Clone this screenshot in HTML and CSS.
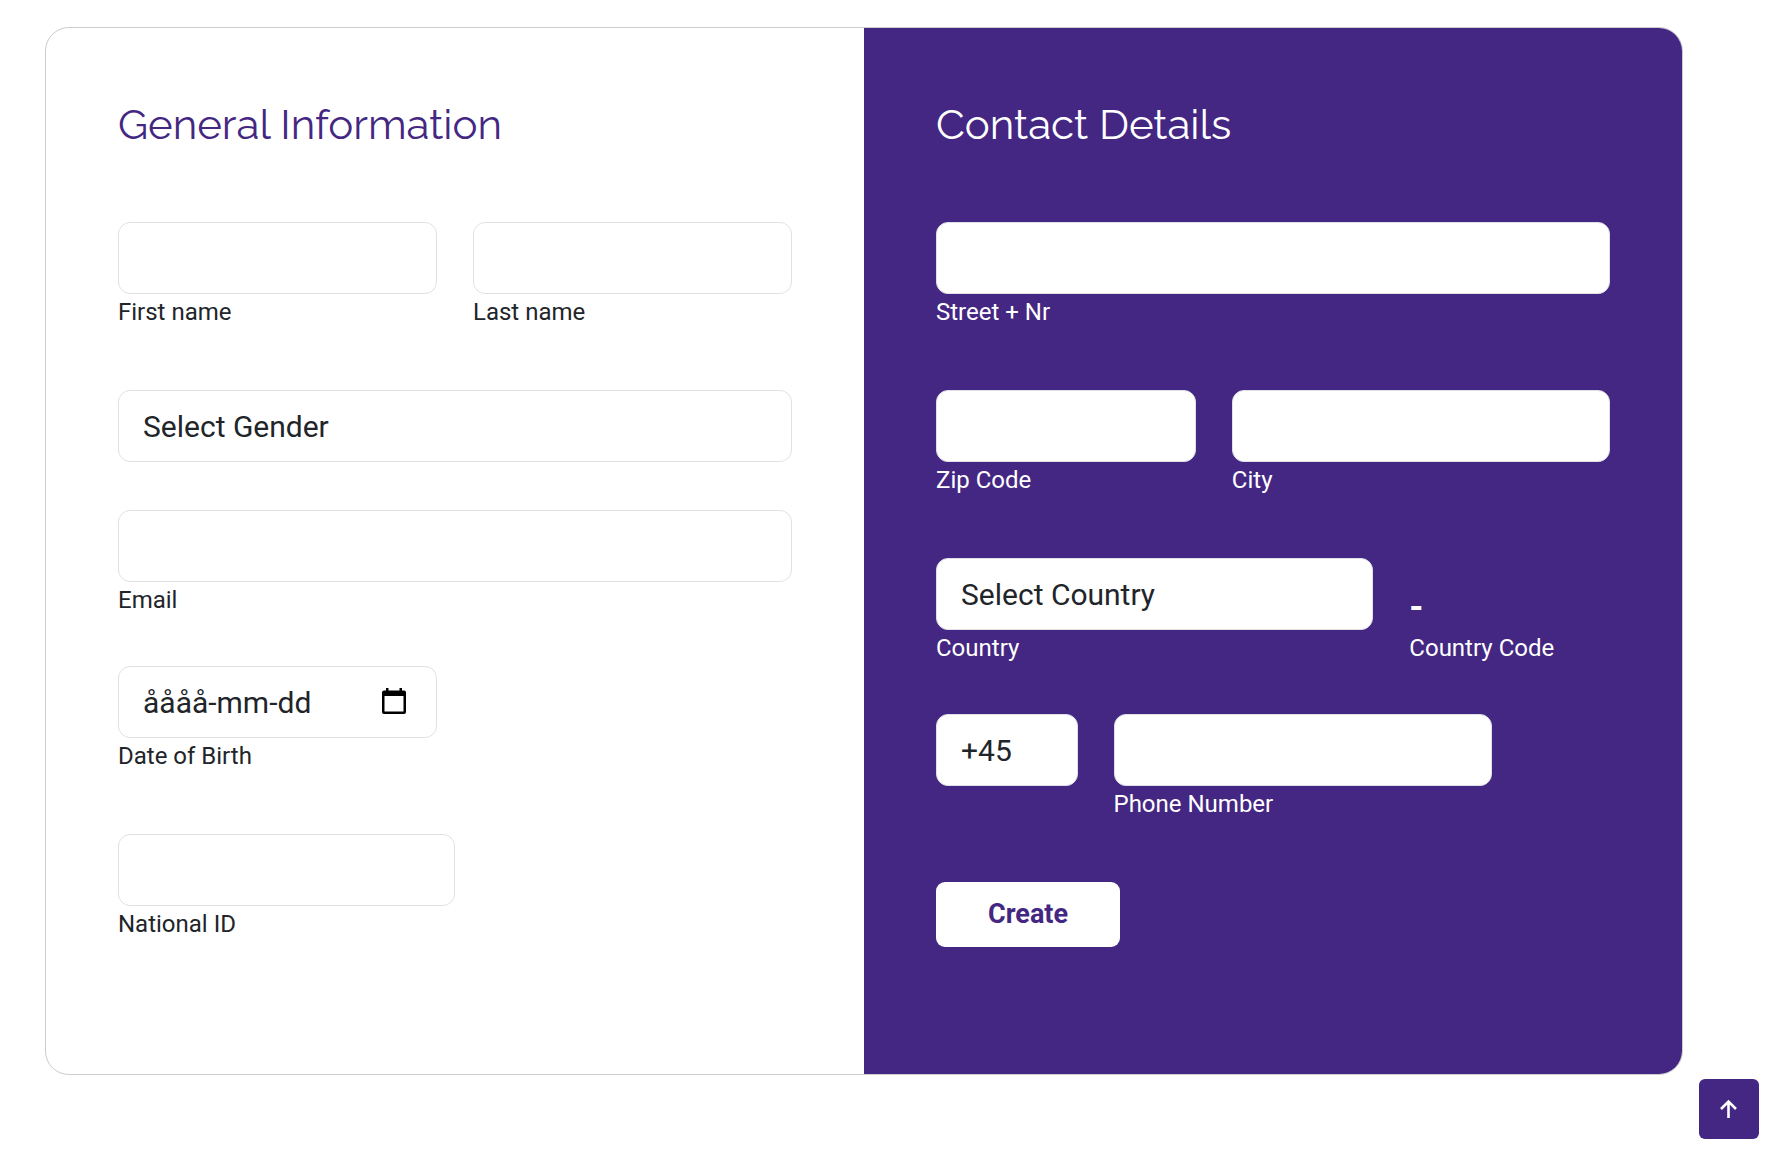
FILE: index.html
```html
<!DOCTYPE html>
<html lang="en">
<head>
<meta charset="utf-8">
<meta name="viewport" content="width=device-width, initial-scale=1">
<title>Registration</title>
<link rel="stylesheet" href="styles.css">
</head>
<body>
<main class="page">
  <form class="card">
    <section class="panel">
      <h1 class="title">General Information</h1>
      <div class="row">
        <div class="field span-6"><input class="control" id="first" type="text"><label for="first">First name</label></div>
        <div class="field span-6"><input class="control" id="last" type="text"><label for="last">Last name</label></div>
      </div>
      <div class="row row-tight">
        <div class="field span-12"><select class="control control-select" id="gender" aria-label="Gender"><option>Select Gender</option></select></div>
      </div>
      <div class="row row-tight">
        <div class="field span-12"><input class="control" id="email" type="email"><label for="email">Email</label></div>
      </div>
      <div class="row">
        <div class="field span-6">
          <div class="date">
            <input class="control" id="birth" type="text" placeholder="åååå-mm-dd">
            <button class="date-button" type="button" aria-label="Open calendar">
              <svg viewBox="0 0 24 26" width="24" height="26"><path d="M2 2.500h2V0h2.500v2.500h11V0H20v2.500h2a2 2 0 0 1 2 2V24a2 2 0 0 1-2 2H2a2 2 0 0 1-2-2V4.500a2 2 0 0 1 2-2zM2.500 8v15.500h19V8z" fill-rule="evenodd"/></svg>
            </button>
          </div>
          <label for="birth">Date of Birth</label>
        </div>
      </div>
      <div class="row">
        <div class="field half"><input class="control" id="national" type="text"><label for="national">National ID</label></div>
      </div>
    </section>
    <section class="panel panel-dark">
      <h2 class="title">Contact Details</h2>
      <div class="row">
        <div class="field span-12"><input class="control" id="street" type="text"><label for="street">Street + Nr</label></div>
      </div>
      <div class="row">
        <div class="field span-5"><input class="control" id="zip" type="text"><label for="zip">Zip Code</label></div>
        <div class="field span-7"><input class="control" id="city" type="text"><label for="city">City</label></div>
      </div>
      <div class="row row-tight">
        <div class="field span-8"><select class="control control-select" id="country"><option>Select Country</option></select><label for="country">Country</label></div>
        <div class="field field-end span-4"><output class="code" id="code">-</output><label for="code">Country Code</label></div>
      </div>
      <div class="row">
        <div class="field span-3"><input class="control" type="text" value="+45" aria-label="Dialling code"></div>
        <div class="field span-7"><input class="control" id="phone" type="tel"><label for="phone">Phone Number</label></div>
      </div>
      <button class="submit" type="submit">Create</button>
    </section>
  </form>
</main>
<a class="to-top" href="#" aria-label="Back to top">
  <svg viewBox="0 0 24 24" width="24" height="24" fill="none" stroke="#fff" stroke-width="2.6"><path d="M11.500 21V5M4 12l7.500-7.500L19 12"/></svg>
</a>
</body>
</html>
```
FILE: styles.css
```css
*, *::before, *::after { box-sizing: border-box; }

body {
  margin: 0;
  background: #fff;
  color: #212529;
  font: 24px/36px Roboto, "Liberation Sans", sans-serif;
}

.page { padding: 27px 88px 72px 45px; }

.card {
  display: grid;
  grid-template-columns: 1fr 1fr;
  overflow: hidden;
  border: 1px solid #ccc;
  border-radius: 24px;
}

.panel { padding: 72px; }
.panel-dark { background: #442782; color: #fff; }

.title {
  margin: 0 0 72px;
  color: #442782;
  font: 400 42px/50px Raleway, Lato, sans-serif;
}
.panel-dark .title { color: #fff; }

.row {
  display: grid;
  grid-template-columns: repeat(12, minmax(0, 1fr));
  column-gap: 36px;
  margin-bottom: 60px;
}
.row-tight { margin-bottom: 48px; }

.span-3 { grid-column: span 3; }
.span-4 { grid-column: span 4; }
.span-5 { grid-column: span 5; }
.span-6 { grid-column: span 6; }
.span-7 { grid-column: span 7; }
.span-8 { grid-column: span 8; }
.span-12 { grid-column: span 12; }
.half { grid-column: 1 / -1; width: 50%; }

.field { display: flex; flex-direction: column; }
.field-end { justify-content: flex-end; }

.control {
  width: 100%;
  height: 72px;
  padding: 0 24px;
  border: 1px solid #dee2e6;
  border-radius: 12px;
  background: #fff;
  color: #212529;
  font: 30px/42px Roboto, "Liberation Sans", sans-serif;
  appearance: none;
}
.control::placeholder { color: #212529; opacity: 1; }
.control-select { padding-top: 2px; }

.date { position: relative; }
.date-button {
  position: absolute;
  top: 0;
  right: 25px;
  bottom: 2px;
  display: flex;
  align-items: center;
  padding: 0 6px;
  border: 0;
  background: none;
}

.code { font-size: 36px; font-weight: 700; line-height: 46px; }

.submit {
  height: 65px;
  padding: 0 52px 2px;
  border: 0;
  border-radius: 9px;
  background: #fff;
  color: #442782;
  font: 700 27px/36px Roboto, "Liberation Sans", sans-serif;
}

.to-top {
  position: fixed;
  right: 12px;
  bottom: 12px;
  display: flex;
  align-items: center;
  justify-content: center;
  width: 60px;
  height: 60px;
  border-radius: 6px;
  background: #442782;
}
```
